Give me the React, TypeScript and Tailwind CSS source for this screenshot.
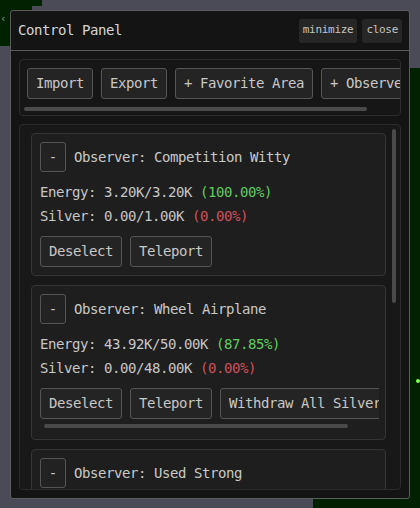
import React from 'react'

const mono = { fontFamily: '"DejaVu Sans Mono", "Liberation Mono", monospace' }

type Obs = {
  name: string
  energy: string
  energyPct: string
  silver: string
  silverPct: string
  withdraw?: boolean
}

const OBSERVERS: Obs[] = [
  { name: 'Competition Witty', energy: '3.20K/3.20K', energyPct: '100.00%', silver: '0.00/1.00K', silverPct: '0.00%' },
  { name: 'Wheel Airplane', energy: '43.92K/50.00K', energyPct: '87.85%', silver: '0.00/48.00K', silverPct: '0.00%', withdraw: true },
  { name: 'Used Strong', energy: '1.00K/1.00K', energyPct: '100.00%', silver: '0.00/1.00K', silverPct: '0.00%' },
]

function Btn({ children }: { children: React.ReactNode }) {
  return (
    <button className="h-[31px] shrink-0 whitespace-nowrap rounded-[3px] border border-[#555] bg-[#242424] px-2 text-[14px] tracking-[-0.43px] text-[#c8c8c8]">
      {children}
    </button>
  )
}

function ObserverCard({ o }: { o: Obs }) {
  return (
    <div className="flex flex-col gap-2 rounded-[4px] border border-[#353535] bg-[#1e1e1e] p-2">
      <div className="flex items-center gap-2">
        <button className="h-[30px] w-[26px] shrink-0 rounded-[3px] border border-[#555] bg-[#222] text-[14px] text-[#c8c8c8]">-</button>
        <span className="whitespace-nowrap text-[14px] tracking-[-0.43px] text-[#c8c8c8]">Observer: {o.name}</span>
      </div>
      <div className="text-[14px] leading-[24px] tracking-[-0.43px] text-[#c8c8c8]">
        <div className="whitespace-nowrap">
          Energy: {o.energy} <span className="text-[#5fcf5f]">({o.energyPct})</span>
        </div>
        <div className="whitespace-nowrap">
          Silver: {o.silver} <span className="text-[#d0505a]">({o.silverPct})</span>
        </div>
      </div>
      {o.withdraw ? (
        <div className="-mr-[2px] flex flex-col gap-[5px] overflow-hidden pb-[3px]">
          <div className="flex gap-2">
            <Btn>Deselect</Btn>
            <Btn>Teleport</Btn>
            <Btn>Withdraw All Silver</Btn>
          </div>
          <div className="ml-1 h-[4px] w-[304px] rounded-full bg-[#4a4a4a]" />
        </div>
      ) : (
        <div className="flex gap-2">
          <Btn>Deselect</Btn>
          <Btn>Teleport</Btn>
        </div>
      )}
    </div>
  )
}

export default function App() {
  return (
    <div className="relative h-[508px] w-[420px] overflow-hidden bg-[#4b4a57]" style={mono}>
      {/* map bits behind the panel */}
      <div className="absolute left-0 top-0 h-[14px] w-[32px] bg-[#012201]" />
      <div className="absolute left-0 top-[14px] h-[8px] w-[40px] bg-[#012201]" />
      <div className="absolute left-0 top-[22px] h-[24px] w-[12px] bg-[#012201]" />
      <div className="absolute left-[32px] top-0 h-[6px] w-[10px] bg-[#012201]" />
      <span className="absolute left-0 top-[12px] text-[11px] leading-[14px] text-[#7a9a7a]">‹</span>
      <div className="absolute right-0 top-[68px] h-[440px] w-[12px] bg-[#012201]" />
      <div className="absolute bottom-0 left-[313px] h-[12px] w-[107px] bg-[#012201]" />
      <div className="absolute left-[416px] top-[379px] h-[4px] w-[4px] rounded-full bg-[#7dff5a]" />

      <div className="absolute left-[10px] top-[10px] flex h-[489px] w-[400px] flex-col rounded-[3px] border border-[#5c5c5c] bg-[#141414]">
        <div className="flex h-[40px] shrink-0 items-center justify-between border-b border-[#5c5c5c] pl-[7px] pr-[7px]">
          <span className="text-[14px] tracking-[-0.43px] text-[#d6d6d6]">Control Panel</span>
          <div className="flex gap-[5px]">
            <button className="h-[24px] rounded-[3px] bg-[#262626] px-[4px] text-[11px] tracking-[-0.3px] text-[#c4c4c4]">minimize</button>
            <button className="h-[24px] rounded-[3px] bg-[#262626] px-[4px] text-[11px] tracking-[-0.3px] text-[#c4c4c4]">close</button>
          </div>
        </div>

        <div className="flex flex-1 flex-col gap-2 overflow-hidden p-2">
          <div className="flex shrink-0 flex-col gap-[8px] overflow-hidden rounded-[4px] border border-[#2c2c2c] bg-[#161616] pb-[4px] pt-2">
            <div className="flex gap-2 pl-[7px]">
              <Btn>Import</Btn>
              <Btn>Export</Btn>
              <Btn>+ Favorite Area</Btn>
              <Btn>+ Observer</Btn>
            </div>
            <div className="ml-[4px] h-[4px] w-[343px] rounded-full bg-[#4a4a4a]" />
          </div>

          <div className="flex min-h-0 flex-1 overflow-hidden rounded-[4px] border border-[#2c2c2c] bg-[#181818]">
            <div className="flex flex-1 flex-col gap-[9px] overflow-hidden pl-[11px] pr-1 pt-2">
              {OBSERVERS.map(o => (
                <ObserverCard key={o.name} o={o} />
              ))}
            </div>
            <div className="w-[10px] shrink-0 pt-[4px]">
              <div className="ml-[2px] h-[174px] w-[4px] rounded-full bg-[#4a4a4a]" />
            </div>
          </div>
        </div>
      </div>
    </div>
  )
}
